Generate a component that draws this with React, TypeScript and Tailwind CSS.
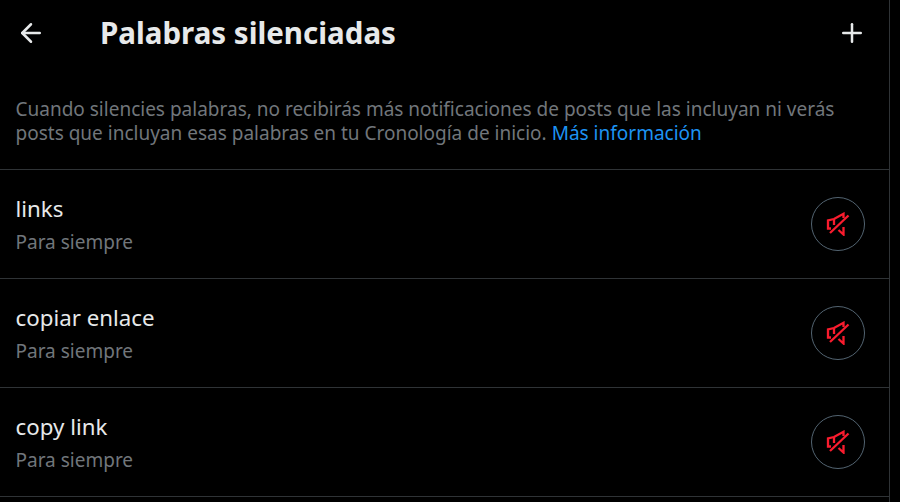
import { ArrowLeft, Plus } from 'lucide-react'

const words = ['links', 'copiar enlace', 'copy link']

function MutedIcon() {
    return (
        <svg viewBox="0 0 24 24" fill="none" stroke="#f91c2e" strokeWidth="2.3" className="w-6 h-6">
            <path d="M5 16.5H2V8.5L8 7L17.5 1.8V6" />
            <path d="M8 7V13" />
            <path d="M4 21L22.5 3.5" />
            <path d="M12.5 18L17.5 22.5V15" />
        </svg>
    )
}

function WordRow({ word }: { word: string }) {
    return (
        <div className="h-[109px] flex items-center justify-between pl-[15.5px] pr-6 border-b border-[#2f3336]">
            <div className="pt-[3px]">
                <div className="text-[22.3px] leading-[28px] text-[#e7e9ea]">{word}</div>
                <div className="mt-[5px] text-[19px] leading-[28px] text-[#71767b]">Para siempre</div>
            </div>
            <button className="w-[54px] h-[54px] rounded-full border border-[#536471] flex items-center justify-center">
                <MutedIcon />
            </button>
        </div>
    )
}

export default function App() {
    return (
        <div className="h-[502px] w-[900px] bg-black overflow-hidden font-['Noto_Sans',sans-serif]">
            <div className="w-[890px] h-full border-r border-[#2f3336]">
                <div className="h-[66px] flex items-center pl-[16px] pr-[22px]">
                    <ArrowLeft className="w-[30px] h-[30px] text-[#e7e9ea]" strokeWidth={2} />
                    <h1 className="ml-[54px] text-[29.5px] font-bold text-[#e7e9ea]">Palabras silenciadas</h1>
                    <Plus className="ml-auto w-[30px] h-[30px] text-[#e7e9ea]" strokeWidth={2} />
                </div>
                <div className="h-[104px] pl-[15.5px] pr-4 pt-[31px] border-b border-[#2f3336] text-[19px] leading-[24px] text-[#71767b]">
                    <p>
                        Cuando silencies palabras, no recibirás más notificaciones de posts que las incluyan ni verás posts que incluyan esas palabras en tu Cronología de inicio.{' '}
                        <a className="text-[#1d93f3]">Más información</a>
                    </p>
                </div>
                {words.map((word) => (
                    <WordRow key={word} word={word} />
                ))}
            </div>
        </div>
    )
}
